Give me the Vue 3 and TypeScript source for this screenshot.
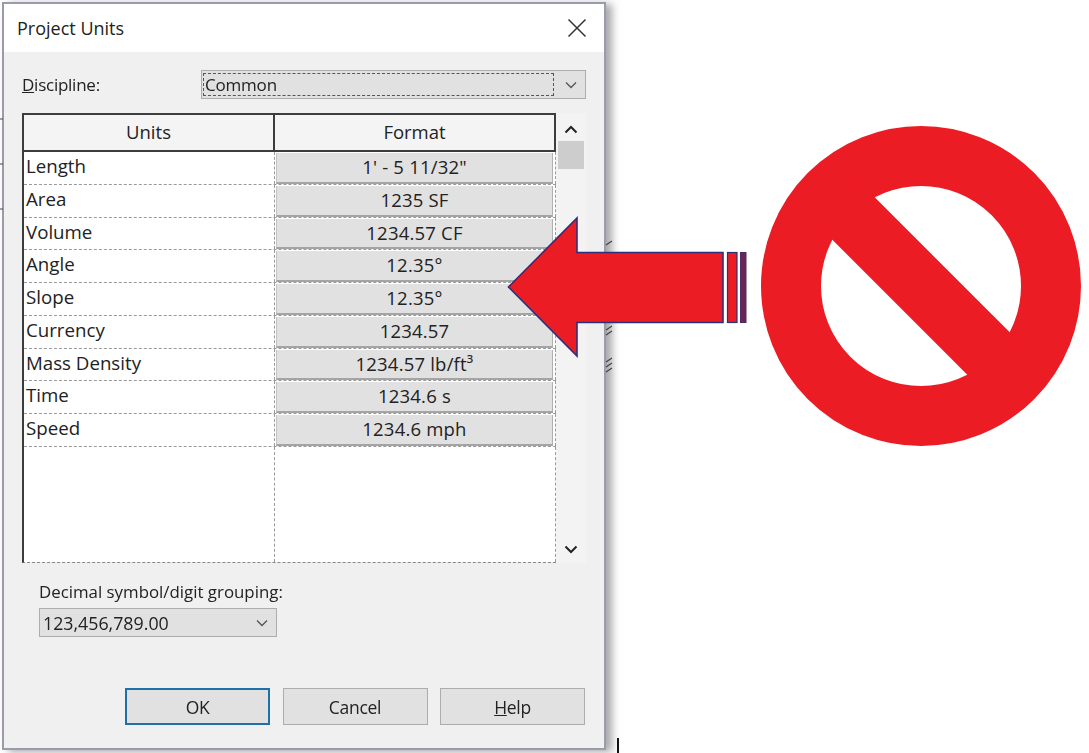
<script setup lang="ts">
interface UnitRow {
  name: string;
  format: string;
}

const rows: UnitRow[] = [
  { name: "Length", format: "1' - 5 11/32\"" },
  { name: "Area", format: "1235 SF" },
  { name: "Volume", format: "1234.57 CF" },
  { name: "Angle", format: "12.35°" },
  { name: "Slope", format: "12.35°" },
  { name: "Currency", format: "1234.57" },
  { name: "Mass Density", format: "1234.57 lb/ft³" },
  { name: "Time", format: "1234.6 s" },
  { name: "Speed", format: "1234.6 mph" },
];
</script>

<template>
  <div class="page">
    <section class="dialog">
      <header class="titlebar">
        <h1 class="title">Project Units</h1>
        <svg class="close" width="20" height="20" viewBox="0 0 20 20">
          <path d="M1.5 1.5 18.5 18.5M18.5 1.5 1.5 18.5" stroke="#333" stroke-width="1.5" fill="none" />
        </svg>
      </header>

      <div class="body">
        <div class="discipline">
          <label class="discipline-label"><u>D</u>iscipline:</label>
          <div class="select">
            <span class="select-value">Common</span>
            <svg class="chevron" width="12" height="8" viewBox="0 0 12 8">
              <path d="M1 1.5 6 6.5 11 1.5" stroke="#555" stroke-width="1.3" fill="none" />
            </svg>
          </div>
        </div>

        <div class="table">
          <div class="table-main">
            <div class="thead">
              <div class="th th-units">Units</div>
              <div class="th th-format">Format</div>
            </div>
            <div class="tbody">
              <div v-for="row in rows" :key="row.name" class="row">
                <div class="cell-name">{{ row.name }}</div>
                <div class="cell-format"><span class="format-btn">{{ row.format }}</span></div>
              </div>
              <div class="filler">
                <div class="filler-left"></div>
                <div class="filler-right"></div>
              </div>
            </div>
          </div>
          <div class="scrollbar">
            <svg width="14" height="9" viewBox="0 0 14 9">
              <path d="M1.5 7.5 7 2 12.5 7.5" stroke="#222" stroke-width="2" fill="none" />
            </svg>
            <div class="thumb"></div>
            <div class="track"></div>
            <svg width="14" height="9" viewBox="0 0 14 9">
              <path d="M1.5 1.5 7 7 12.5 1.5" stroke="#222" stroke-width="2" fill="none" />
            </svg>
          </div>
        </div>

        <div class="grouping">
          <label class="grouping-label">Decimal symbol/digit <u>g</u>rouping:</label>
          <div class="combo">
            <span>123,456,789.00</span>
            <svg width="12" height="8" viewBox="0 0 12 8">
              <path d="M1 1.5 6 6.5 11 1.5" stroke="#555" stroke-width="1.3" fill="none" />
            </svg>
          </div>
        </div>

        <footer class="actions">
          <button class="btn btn-default">OK</button>
          <button class="btn">Cancel</button>
          <button class="btn"><u>H</u>elp</button>
        </footer>
      </div>
    </section>

    <!-- stray marks from the drawing behind the dialog -->
    <svg class="backdrop-marks" width="1089" height="753" viewBox="0 0 1089 753">
      <g stroke="#444" stroke-width="1.2" fill="none">
        <path d="M0 119H3M0 164H3M0 209H3" />
        <path d="M606 245l6-4M606 330l6-4M606 335l6-4M606 362l6-4M606 367l6-4M606 372l6-4" />
      </g>
      <rect x="617" y="738" width="2" height="15" fill="#111" />
    </svg>

    <!-- red arrow callout -->
    <svg class="arrow" width="1089" height="753" viewBox="0 0 1089 753">
      <path d="M723 252.500H577V218L508.500 287 577 356V322.500H723Z" fill="#ec1c24" stroke="#2f2f78" stroke-width="1.6" stroke-linejoin="miter" />
      <rect x="727.500" y="252.500" width="9.500" height="70" fill="#ec1c24" stroke="#2f2f78" stroke-width="1.2" />
      <rect x="740.500" y="252.500" width="5.500" height="70" fill="#6e2350" stroke="#4a2a70" stroke-width="1" />
    </svg>

    <!-- prohibition sign -->
    <svg class="forbid" width="1089" height="753" viewBox="0 0 1089 753">
      <circle cx="921" cy="286" r="130" fill="none" stroke="#ec1c24" stroke-width="60" />
      <path d="M836 201 1006 371" stroke="#ec1c24" stroke-width="60" fill="none" />
    </svg>
  </div>
</template>

<style>
html,
body {
  margin: 0;
  background: #fff;
}
</style>

<style scoped>
.page {
  position: relative;
  width: 1089px;
  height: 753px;
  overflow: hidden;
  background: #fff;
  padding: 2px 0 0 2px;
  box-sizing: border-box;
  font-family: "Open Sans", "Noto Sans", sans-serif;
  color: #222;
}
.dialog {
  width: 604px;
  height: 748px;
  box-sizing: border-box;
  border: 2px solid #9a9cae;
  background: #f0f0f0;
  box-shadow: 6px 2px 8px rgba(80, 80, 80, 0.5);
  display: flex;
  flex-direction: column;
  filter: blur(0.35px);
}
.titlebar {
  height: 48px;
  flex-shrink: 0;
  background: #fff;
  display: flex;
  align-items: center;
  justify-content: space-between;
  padding: 0 17px 0 13px;
}
.title {
  margin: 0;
  font-size: 18px;
  font-weight: 400;
}
.close {
  margin-top: -1px;
}
.body {
  flex: 1;
  display: flex;
  flex-direction: column;
  padding: 18px 18px 23px 18px;
}
.discipline {
  display: flex;
  align-items: center;
  justify-content: space-between;
  height: 29px;
}
.discipline-label {
  font-size: 17px;
  letter-spacing: -0.25px;
}
.select {
  width: 385px;
  height: 29px;
  box-sizing: border-box;
  background: #e1e1e1;
  border: 1px solid #adadad;
  display: flex;
  align-items: center;
  justify-content: space-between;
  padding: 2px 8px 2px 1px;
}
.select-value {
  flex: 0 0 351px;
  height: 23px;
  box-sizing: border-box;
  border: 1px dashed #555;
  line-height: 21px;
  padding-left: 1px;
  font-size: 17px;
  letter-spacing: -0.2px;
}
.table {
  margin-top: 14px;
  height: 450px;
  display: flex;
}
.table-main {
  width: 534px;
  display: flex;
  flex-direction: column;
  box-sizing: border-box;
  border-left: 2px solid #3c3c3c;
  border-bottom: 1px dashed #888;
}
.thead {
  display: flex;
  height: 39px;
  flex-shrink: 0;
  box-sizing: border-box;
  border-top: 2px solid #3c3c3c;
  border-bottom: 2px solid #3c3c3c;
  border-right: 2px solid #3c3c3c;
  background: #f4f4f4;
}
.th {
  font-size: 18.500px;
  line-height: 34px;
  text-align: center;
}
.th-units {
  width: 251px;
  box-sizing: border-box;
  border-right: 2px solid #3c3c3c;
}
.th-format {
  flex: 1;
}
.tbody {
  flex: 1;
  display: flex;
  flex-direction: column;
  background: #fff;
}
.row {
  display: flex;
  height: 32.750px;
  box-sizing: border-box;
  border-bottom: 1px dashed #9a9a9a;
}
.cell-name {
  width: 251px;
  box-sizing: border-box;
  border-right: 1px dashed #9a9a9a;
  padding-left: 2px;
  font-size: 18.700px;
  line-height: 27px;
}
.cell-format {
  flex: 1;
  display: flex;
  padding: 1px 2px 0 1px;
  border-right: 1px dashed #9a9a9a;
}
.format-btn {
  flex: 1;
  background: #e1e1e1;
  border-left: 1px solid #c4c4c4;
  border-right: 1px solid #b0b0b0;
  border-bottom: 2px solid #a4a4a4;
  text-align: center;
  font-size: 18.500px;
  line-height: 28px;
  letter-spacing: 0.2px;
}
.filler {
  flex: 1;
  display: flex;
}
.filler-left {
  width: 251px;
  box-sizing: border-box;
  border-right: 1px dashed #9a9a9a;
}
.filler-right {
  flex: 1;
  border-right: 1px dashed #9a9a9a;
}
.scrollbar {
  width: 30px;
  display: flex;
  flex-direction: column;
  align-items: center;
  background: #f3f3f3;
  padding-top: 12px;
  padding-bottom: 9px;
  box-sizing: border-box;
}
.thumb {
  width: 26px;
  height: 28px;
  margin-top: 7px;
  background: #cdcdcd;
}
.track {
  flex: 1;
}
.grouping {
  margin: 17px 0 0 17px;
  display: flex;
  flex-direction: column;
  gap: 4px;
}
.grouping-label {
  font-size: 16.850px;
  line-height: 24px;
}
.combo {
  width: 238px;
  height: 29px;
  box-sizing: border-box;
  background: #e1e1e1;
  border: 1px solid #adadad;
  display: flex;
  align-items: center;
  justify-content: space-between;
  padding: 0 8px 0 3px;
  font-size: 17.800px;
}
.actions {
  margin-top: auto;
  margin-right: 1px;
  display: flex;
  justify-content: flex-end;
  gap: 12.500px;
}
.btn {
  width: 145px;
  height: 37px;
  box-sizing: border-box;
  background: #e1e1e1;
  border: 1px solid #adadad;
  border-radius: 0;
  padding: 0;
  font-family: inherit;
  font-size: 17.500px;
  letter-spacing: -0.3px;
  color: #222;
}
.btn-default {
  border: 2px solid #1f6fa8;
}
.backdrop-marks,
.arrow,
.forbid {
  position: absolute;
  left: 0;
  top: 0;
}
.arrow,
.forbid {
  filter: blur(0.3px);
}
</style>
